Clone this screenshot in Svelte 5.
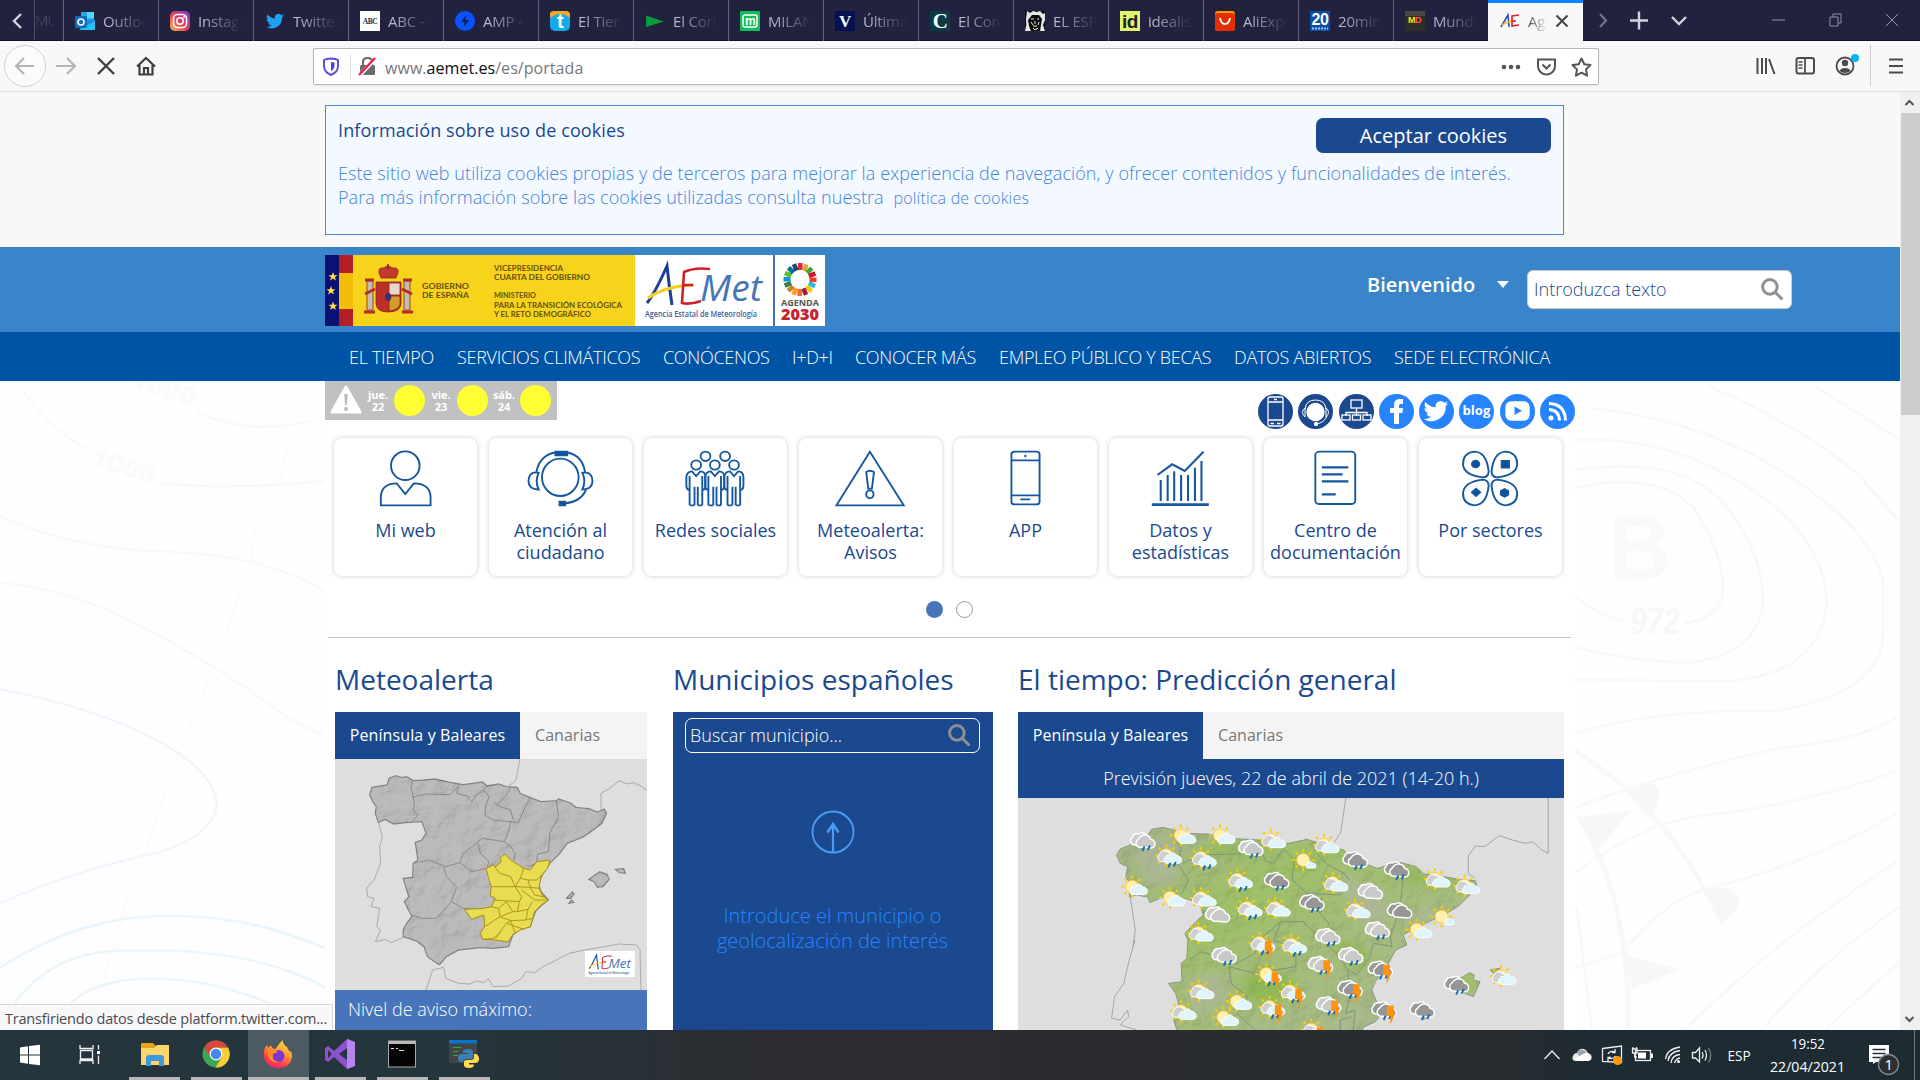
<script>
  const tabs = [
    { t: 'Outloo', k: 'outlook' }, { t: 'Instagr', k: 'insta' }, { t: 'Twitter', k: 'twitter' },
    { t: 'ABC - T', k: 'abc' }, { t: 'AMP - ', k: 'amp' }, { t: 'El Tiem', k: 'tiempo' },
    { t: 'El Corte', k: 'corte' }, { t: 'MILAN', k: 'milan' }, { t: 'Última', k: 'ultima' },
    { t: 'El Conf', k: 'conf' }, { t: 'EL ESP', k: 'esp' }, { t: 'idealis', k: 'id' },
    { t: 'AliExpr', k: 'ali' }, { t: '20minu', k: 'veinte' }, { t: 'Mundo', k: 'mundo' }
  ];
  const nav = [
    ['EL TIEMPO', 108], ['SERVICIOS CLIMÁTICOS', 206], ['CONÓCENOS', 129], ['I+D+I', 63], ['CONOCER MÁS', 144],
    ['EMPLEO PÚBLICO Y BECAS', 235], ['DATOS ABIERTOS', 160], ['SEDE ELECTRÓNICA', 170]
  ];
  const days = [['jue.', '22'], ['vie.', '23'], ['sáb.', '24']];
  const cards = ['Mi web', 'Atención al ciudadano', 'Redes sociales', 'Meteoalerta: Avisos', 'APP', 'Datos y estadísticas', 'Centro de documentación', 'Por sectores'];
  const social = ['phone', 'headset', 'map', 'facebook', 'twitter', 'blog', 'youtube', 'rss'];
  const people = [922, 968, 1015];
  const bars = [[541, 180], [558, 165], [574, 154], [591, 165], [608, 165], [625, 143], [641, 123]];
  const rays = [0, 45, 90, 135, 180, 225, 270, 315];

  // Forecast symbols: position on the map grid, sun, cloud tone, rain, storm
  const weather = [
    [388, 573, 0, 'g', 1, 0], [680, 595, 0, 'g', 1, 0], [888, 860, 0, 'g', 1, 0], [1022, 840, 0, 'g', 1, 0],
    [950, 917, 0, 'g', 1, 0], [608, 917, 0, 'g', 1, 0], [1003, 725, 0, 'g', 0, 0], [590, 795, 0, 'g', 0, 0],
    [962, 630, 0, 'd', 1, 0], [1074, 660, 0, 'd', 1, 0], [750, 692, 0, 'd', 1, 0], [845, 758, 0, 'd', 1, 0],
    [1236, 1004, 0, 'd', 1, 0], [1143, 1080, 0, 'd', 1, 0], [1082, 783, 0, 'd', 0, 0],
    [740, 575, 1, 'm', 0, 0], [884, 590, 1, 'm', 0, 0], [1184, 693, 1, 'm', 0, 0], [908, 705, 1, 'm', 0, 0],
    [968, 785, 1, 'm', 0, 0], [1264, 713, 1, 'm', 0, 0], [552, 750, 1, 'm', 0, 0], [752, 780, 1, 'm', 0, 0],
    [544, 855, 1, 'm', 0, 0], [546, 1028, 1, 'm', 0, 0], [498, 1090, 1, 'm', 0, 0], [1362, 985, 1, 'm', 0, 0],
    [497, 562, 1, 'w', 0, 0], [603, 562, 1, 'w', 0, 0], [366, 716, 1, 'w', 0, 0], [468, 749, 1, 'w', 0, 0],
    [1135, 845, 1, 'w', 0, 0], [648, 1060, 1, 'w', 0, 0], [612, 1108, 1, 'w', 0, 0],
    [828, 636, 1, 's', 0, 0], [1202, 806, 1, 's', 0, 0],
    [458, 622, 1, 'm', 1, 0], [552, 630, 1, 'm', 1, 0], [650, 695, 1, 'm', 1, 0], [676, 780, 1, 'm', 1, 0], [796, 890, 1, 'm', 1, 0],
    [710, 885, 1, 'm', 1, 1], [728, 978, 1, 'w', 1, 1], [792, 1030, 1, 'm', 1, 1], [737, 1077, 1, 'm', 1, 1], [850, 1145, 1, 'm', 1, 1],
    [868, 944, 0, 'g', 1, 1], [890, 1065, 0, 'g', 1, 1],
    [1030, 958, 0, 'd', 1, 1], [948, 1016, 0, 'd', 1, 1], [1040, 1080, 0, 'd', 1, 1]
  ];
</script>

{#snippet lens(size)}
  <svg width={size} height={size} viewBox="0 0 22 22" class="lens"><circle cx="8.5" cy="8.5" r="7" /><path d="M13.5 13.5L20.5 20.5" /></svg>
{/snippet}

{#snippet aemet()}
  <rect width="138" height="71" fill="#fff" />
  <path d="M12 48Q20 38 32 11Q34 30 37 50" fill="none" stroke="#1c3f94" stroke-width="3" />
  <path d="M13 43Q30 31 59 30" fill="none" stroke="#f7cf1b" stroke-width="3" />
  <path d="M75 14Q60 12 49 17L47 48Q55 50 66 46M48 30H58" fill="none" stroke="#cf1f2e" stroke-width="2.600" />
  <text x="65" y="46" class="met" textLength="62" lengthAdjust="spacingAndGlyphs">Met</text>
  <text x="10" y="62" class="agency" textLength="112" lengthAdjust="spacingAndGlyphs">Agencia Estatal de Meteorología</text>
{/snippet}

<div class="screen">
  <div class="tabbar">
    <div class="prev"><svg width="12" height="18" viewBox="0 0 12 18"><path d="M10 2L3 9L10 16" stroke="#d5d5dc" stroke-width="2.4" fill="none" /></svg></div>
    <div class="cut">MU</div>
    {#each tabs as tab}
      <div class="tab">
        <svg width="20" height="20" viewBox="0 0 20 20">
          {#if tab.k === 'outlook'}
            <path d="M6 1h13v8H6z" fill="#28a8ea" /><path d="M12 1h7v6h-7z" fill="#50d9ff" /><path d="M4 9l16 0v10H5z" fill="#1490df" /><path d="M4 19L20 10v9z" fill="#28c0f0" /><rect y="5" width="12" height="12" rx="1" fill="#0f6cbd" /><circle cx="6" cy="11" r="3" fill="none" stroke="#fff" stroke-width="1.6" />
          {:else if tab.k === 'insta'}
            <defs><linearGradient id="ig" x1="0" y1="1" x2="1" y2="0"><stop offset="0" stop-color="#fdc34c" /><stop offset=".45" stop-color="#ee3c54" /><stop offset="1" stop-color="#7638d8" /></linearGradient></defs>
            <rect width="20" height="20" rx="5" fill="url(#ig)" /><rect x="3.5" y="3.5" width="13" height="13" rx="4" fill="none" stroke="#fff" stroke-width="1.6" /><circle cx="10" cy="10" r="3.2" fill="none" stroke="#fff" stroke-width="1.6" /><circle cx="14" cy="6" r="1" fill="#fff" />
          {:else if tab.k === 'twitter'}
            <path transform="translate(1 1) scale(.78)" fill="#1da1f2" d="M23 4.600a10 10 0 0 1-2.700.7 5 5 0 0 0 2-2.600 9 9 0 0 1-3 1.200a4.700 4.700 0 0 0-8 4.300A13.400 13.400 0 0 1 1.700 3.200a4.700 4.700 0 0 0 1.500 6.300 4.700 4.700 0 0 1-2.200-.6 4.700 4.700 0 0 0 3.800 4.700 4.700 4.700 0 0 1-2.100.1 4.700 4.700 0 0 0 4.400 3.300A9.500 9.500 0 0 1 0 19a13.400 13.400 0 0 0 20.600-12z" />
          {:else if tab.k === 'abc'}
            <rect width="20" height="20" fill="#fff" /><text x="10" y="13" class="fi serif" font-size="7.500" fill="#1a2b48">ABC</text>
          {:else if tab.k === 'amp'}
            <circle cx="10" cy="10" r="10" fill="#0b52ff" /><path d="M11 4L6 11h3.500L9 16l5-7h-3.500z" fill="#12224c" />
          {:else if tab.k === 'tiempo'}
            <rect width="20" height="20" rx="5" fill="#16a8e8" /><path d="M0 7V3Q0 0 4 0H16Q20 0 20 4V7Q10-1 0 7z" fill="#f5a623" /><text x="10" y="17" class="fi" font-size="20" fill="#fff">t</text>
          {:else if tab.k === 'corte'}
            <path d="M1 4.500L19 10.500L1 16z" fill="#079b3b" />
          {:else if tab.k === 'milan'}
            <rect width="20" height="20" rx="1" fill="#12bd5a" /><rect x="3" y="4" width="14" height="12" rx="2" fill="none" stroke="#fff" stroke-width="1.500" /><text x="10" y="14" class="fi" font-size="12" fill="#fff">m</text>
          {:else if tab.k === 'ultima'}
            <rect width="20" height="20" fill="#04134f" /><text x="10" y="15.500" class="fi serif" font-size="17" fill="#fff">V</text>
          {:else if tab.k === 'conf'}
            <rect width="20" height="20" fill="#0a3a44" /><text x="10" y="17" class="fi serif" font-size="21" fill="#fff">C</text>
          {:else if tab.k === 'esp'}
            <rect width="20" height="20" fill="#0c0c0c" /><path d="M0 20Q2 14 1 8L2 0L5 2L8 0L12 1L15 0L18 3L20 2V9L18 14L20 20H15L16 14L17 8L14 4H7L3 9L4 15L6 20z" fill="#e6e6e6" /><path d="M6 8h3M12 8h2M8 15h4M8 17l2 2 3-2M10 10v3M6 11l2 3M14 11l-1 3" stroke="#eee" fill="none" />
          {:else if tab.k === 'id'}
            <rect width="20" height="20" fill="#e1f56e" /><text x="10" y="16.500" class="fi" font-size="19" fill="#222">id</text>
          {:else if tab.k === 'ali'}
            <rect width="20" height="20" rx="3" fill="#ff9900" /><path d="M0 4Q0 2 3 2H17Q20 2 20 5V17Q20 20 17 20H3Q0 20 0 17z" fill="#e62e04" /><path d="M5 7Q6 13 10 13Q14 13 15 7" stroke="#fff" stroke-width="1.800" fill="none" />
          {:else if tab.k === 'veinte'}
            <rect width="20" height="20" fill="#0b4ea2" /><text x="10" y="14" class="fi" font-size="16" fill="#fff">20</text><path d="M2 17.500H18" stroke="#9fc4ee" stroke-width="2" stroke-dasharray="2 1" />
          {:else}
            <rect width="20" height="20" fill="#2d2d2a" /><rect width="20" height="5" fill="#494943" /><text x="9.500" y="12" class="fi" font-size="9" fill="#ffe512">M<tspan fill="#f55">D</tspan></text>
          {/if}
        </svg>
        <span>{tab.t}</span>
      </div>
    {/each}
    <div class="tab active">
      <svg width="20" height="20" viewBox="0 0 20 20"><path d="M1 16L8 4L9 16" stroke="#3442b8" stroke-width="1.500" fill="none" /><path d="M2 14Q8 10 14 10" stroke="#f3bd22" stroke-width="1.500" fill="none" /><path d="M19 4L12 5V15L19 14M12 10H16" stroke="#e0222c" stroke-width="1.600" fill="none" /></svg>
      <span>Age</span>
      <svg class="x" width="14" height="14" viewBox="0 0 14 14"><path d="M1.500 1.500L12.500 12.500M12.500 1.500L1.500 12.500" stroke="#444" stroke-width="2" /></svg>
    </div>
    <svg class="winctl" width="337" height="41" viewBox="0 0 337 41" fill="none" stroke="#d3d3da">
      <path d="M17 14L23 20.500L17 27" stroke="#73748a" stroke-width="2.200" />
      <path d="M47 20.500H65M56 11.500V29.500M89 17L96 24L103 17" stroke-width="2.400" />
      <path d="M189 20H202M247 17h8v9h-8zM250 17v-3h8v9h-3M303 14l12 12M315 14l-12 12" stroke="#9092a4" />
    </svg>
  </div>

  <div class="toolbar">
    <div class="btns">
      <svg width="160" height="49" viewBox="0 0 160 49" fill="none" stroke-width="2.200">
        <circle cx="25" cy="25" r="20.500" stroke="#d2d2d2" stroke-width="1" fill="#fbfbfb" />
        <path d="M34 25H16M24 17L16 25L24 33M56 25H74M67 17L75 25L67 33" stroke="#b5b5b6" />
        <path d="M98 17L114 33M114 17L98 33" stroke="#3f3f40" stroke-width="2.400" />
        <path d="M137 25.500L146 17L155 25.500M139.500 24V33.500H152.500V24M144 33V27H148V33" stroke="#3f3f40" stroke-width="2.200" />
      </svg>
    </div>
    <div class="url">
      <svg width="66" height="36" viewBox="0 0 66 36" fill="none">
        <path d="M17 9.500q-5 .3-7 1.500v6q0 6 7 9q7-3 7-9v-6q-2-1.200-7-1.500z" stroke="#5a50de" stroke-width="2" /><path d="M17 13v9q3.500-2 3.500-5.500V13.500z" fill="#4646d8" />
        <path d="M36.500 5V31" stroke="#ddd" /><rect x="46" y="16" width="15" height="10" rx="1.500" fill="#6a6a6d" /><path d="M49 17V13q0-4 4.500-4t4.500 4v4" stroke="#6a6a6d" stroke-width="2.200" /><path d="M46 26L61 10" stroke="#fff" stroke-width="4" /><path d="M45 26L61 9" stroke="#f51549" stroke-width="2.200" />
      </svg>
      <span class="addr">www.<b>aemet.es</b>/es/portada</span>
      <svg width="104" height="36" viewBox="0 0 104 36" fill="none" stroke="#545456" stroke-width="2">
        <g fill="#545456" stroke="none"><circle cx="10" cy="18" r="2.300" /><circle cx="17" cy="18" r="2.300" /><circle cx="24" cy="18" r="2.300" /></g>
        <path d="M44 10.500H61V17a8.500 8.500 0 0 1-17 0zM48.500 15.500L52.500 19.500L56.500 15.500" />
        <path d="M87.500 9.500L90.300 15.200L96.500 16L92 20.400L93.100 26.700L87.500 23.700L81.900 26.700L83 20.400L78.500 16L84.700 15.200z" stroke-linejoin="round" />
      </svg>
    </div>
    <svg class="tools" width="172" height="49" viewBox="0 0 172 49" fill="none" stroke="#4b4b4d" stroke-width="2">
      <path d="M9.500 17V33M14 17V33M18 17V33M21 18L26.500 33" />
      <rect x="48.500" y="17" width="17.500" height="15.500" rx="2" /><path d="M57 17V32M50.500 21H54.500M50.500 24H54.500M50.500 27H54.500" stroke-width="1.700" />
      <circle cx="97" cy="25" r="8.500" stroke-width="1.800" /><circle cx="97" cy="22" r="3.200" fill="#4b4b4d" stroke="none" /><path d="M91.500 30q1-3 5.500-3t5.500 3q-5.500 4-11 0z" fill="#4b4b4d" stroke="none" /><circle cx="107" cy="17" r="4" fill="#00b3f4" stroke="none" />
      <path d="M122.500 4V45" stroke="#ccc" stroke-width="1" /><path d="M141 18.500H155M141 25H155M141 31.500H155" stroke-width="2.200" />
    </svg>
  </div>

  <div class="viewport">
    <div class="page">
      <div class="cookiewrap">
        <section class="cookie">
          <div class="info">
            <h3>Información sobre uso de cookies</h3>
            <p>Este sitio web utiliza cookies propias y de terceros para mejorar la experiencia de navegación, y ofrecer contenidos y funcionalidades de interés.</p>
            <p class="second">Para más información sobre las cookies utilizadas consulta nuestra <a href="#politica">política de cookies</a></p>
          </div>
          <button class="accept">Aceptar cookies</button>
        </section>
      </div>

      <header>
        <svg width="500" height="71" viewBox="0 0 500 71">
          <rect width="14" height="71" fill="#0a1172" /><rect x="14" width="14" height="71" fill="#b21f24" /><rect x="14" y="18" width="14" height="36" fill="#f3bd0c" />
          <g fill="#ffe14a"><path id="st" d="M8 17l1.200 3.200h3.300l-2.600 2 1 3.300L8 23.500l-2.900 2 1-3.300-2.600-2h3.300z" /><use href="#st" x="-2" y="14" /><use href="#st" y="29.500" /></g>
          <rect x="28" width="282" height="71" fill="#f8d31c" />
          <g stroke="#8b271b" stroke-width=".8">
            <path d="M54 18Q53 12 59 13Q63 9 67 13Q74 12 73 18L71 23H56z" fill="#c53a2b" /><path d="M63 9V14" stroke-width="1.600" />
            <path d="M51 27H76V48Q76 57 63 57Q51 57 51 48z" fill="#bd3028" /><rect x="64" y="28" width="11" height="12" fill="#ead5cd" /><path d="M64 41H75V50Q73 55 64 56z" fill="#d49a2a" />
            <path d="M42 26h6v29h-6zM79 26h6v29h-6z" fill="#c3bdb2" /><path d="M39 57H50M77 57H88M40 25H49M78 25H87M40 39L50 34M77 34L87 39" stroke="#b62d25" stroke-width="3" />
            <ellipse cx="63" cy="42" rx="3" ry="4" fill="#2a348f" />
          </g>
          <g class="gov"><text x="97" y="33.500" textLength="47" lengthAdjust="spacingAndGlyphs">GOBIERNO</text><text x="97" y="42.500" textLength="47" lengthAdjust="spacingAndGlyphs">DE ESPAÑA</text>
            <text x="169" y="15.500" textLength="69" lengthAdjust="spacingAndGlyphs">VICEPRESIDENCIA</text><text x="169" y="25" textLength="96" lengthAdjust="spacingAndGlyphs">CUARTA DEL GOBIERNO</text>
            <text x="169" y="43" textLength="42" lengthAdjust="spacingAndGlyphs">MINISTERIO</text><text x="169" y="52.500" textLength="128" lengthAdjust="spacingAndGlyphs">PARA LA TRANSICIÓN ECOLÓGICA</text><text x="169" y="61.500" textLength="97" lengthAdjust="spacingAndGlyphs">Y EL RETO DEMOGRÁFICO</text></g>
          <g transform="translate(310 0)">{@render aemet()}</g>
          <rect x="448" width="2" height="71" fill="#4272b5" /><rect x="450" width="50" height="71" fill="#fff" />
          <g fill="none" stroke-width="7" stroke-dasharray="4.600 .6">
            {#each ['#e5243b', '#dda63a', '#4c9f38', '#c5192d', '#ff3a21', '#26bde2', '#fcc30b', '#a21942', '#fd6925', '#fd9d24', '#bf8b2e', '#3f7e44', '#0a97d9', '#56c02b', '#00689d', '#19486a'] as c, i}
              <path d="M473 11.500h4.600" stroke={c} transform="rotate({i * 22.5} 475 24.500)" />
            {/each}
          </g>
          <text x="456" y="51" class="agenda" textLength="38" lengthAdjust="spacingAndGlyphs">AGENDA</text>
          <text x="456" y="64.500" class="y2030" textLength="38" lengthAdjust="spacingAndGlyphs">2030</text>
        </svg>
        <div class="welcome">Bienvenido<svg width="12" height="7" viewBox="0 0 12 7"><path d="M0 0H12L6 7z" fill="#fff" /></svg></div>
        <div class="search"><span>Introduzca texto</span>{@render lens(23)}</div>
      </header>

      <nav>{#each nav as [label, w]}<a href="#nav" style="width:{w}px">{label}</a>{/each}</nav>

      <div class="main">
        <svg class="contours" width="325" height="649" viewBox="0 0 975 1544" preserveAspectRatio="none">
          <g class="soft"><path d="M70 25Q170 130 260 160M480 243Q700 260 975 238M590 75Q740 130 930 95M0 320Q160 385 420 403Q700 410 790 440Q880 455 975 500M0 480Q200 490 440 590Q700 700 860 800L975 848" /><path class="faint" d="M870 130L840 240M770 330L750 440L640 680L540 880L450 1090L370 1260L310 1420" />
            <text x="270" y="200" transform="rotate(14 270 200)" textLength="195" lengthAdjust="spacingAndGlyphs">1000</text><text x="395" y="15" transform="rotate(14 395 15)" textLength="190" lengthAdjust="spacingAndGlyphs">1000</text></g>
          <path class="lav" d="M0 733Q280 775 460 850Q650 930 650 1010Q640 1080 480 1120Q200 1170 0 1243" />
          <path class="sky" d="M0 1395Q250 1270 500 1273Q750 1270 975 1350M40 1485Q150 1360 360 1355H520Q800 1365 975 1443M210 1480Q300 1420 450 1422Q620 1420 810 1480" />
        </svg>
        <div class="center">
          <div class="topstrip">
            <div class="alerts">
              <svg width="32" height="30" viewBox="0 0 32 30"><path d="M16 2L30 27H2z" fill="#fff" stroke="#fff" stroke-width="3" stroke-linejoin="round" /><path d="M14.300 9h3.400l-.8 11h-1.800z" fill="#bbb" /><circle cx="16" cy="24" r="2" fill="#bbb" /></svg>
              {#each days as [d, n]}<span class="day">{d}<br />{n}</span><i class="dot"></i>{/each}
            </div>
            <div class="social">
              {#each social as s, i}
                <svg width="35" height="35" viewBox="0 0 35 35">
                  <circle cx="17.500" cy="17.500" r="17.500" fill={i < 3 ? '#1b498f' : '#2684ff'} />
                  <g fill="none" stroke="#fff" stroke-width="1.300">
                    {#if s === 'phone'}<rect x="10" y="3" width="15" height="29" rx="2" /><path d="M10 8H25M10 26H25M16 5.500H19" /><path d="M12.500 29.500H16M19 29.500H22.500" />
                    {:else if s === 'headset'}<circle cx="17.500" cy="18" r="8.500" fill="#fff" /><path d="M7 15Q8 6 17.500 6T28 15M29 22Q26 29 18 30" stroke-width="1" /><path d="M7 14Q2 18 7 23zM28 14Q33 18 28 23z" stroke-width="1" /><circle cx="18" cy="30" r="1.500" fill="#fff" />
                    {:else if s === 'map'}<rect x="12" y="6" width="11" height="8" /><path d="M17.500 14V22M7 22V18.500H28V22" /><rect x="3" y="21" width="8" height="5" /><rect x="13.500" y="21" width="8" height="5" /><rect x="24" y="21" width="8" height="5" />
                    {:else if s === 'facebook'}<path d="M15 30V19H11V14H15V11Q15 5 20.500 5H24V10H21.500Q20 10 20 12V14H24L23.500 19H20V30z" fill="#fff" stroke="none" />
                    {:else if s === 'twitter'}<path transform="translate(4.500 4.500) scale(1.080)" stroke="none" fill="#fff" d="M23 4.600a10 10 0 0 1-2.700.7 5 5 0 0 0 2-2.600 9 9 0 0 1-3 1.200a4.700 4.700 0 0 0-8 4.300A13.400 13.400 0 0 1 1.700 3.200a4.700 4.700 0 0 0 1.500 6.300 4.700 4.700 0 0 1-2.200-.6 4.700 4.700 0 0 0 3.800 4.700 4.700 4.700 0 0 1-2.100.1 4.700 4.700 0 0 0 4.400 3.300A9.500 9.500 0 0 1 0 19a13.400 13.400 0 0 0 20.600-12z" />
                    {:else if s === 'blog'}<text x="17.500" y="21" class="blog" textLength="28" lengthAdjust="spacingAndGlyphs">blog</text>
                    {:else if s === 'youtube'}<rect x="6" y="8" width="23" height="18" rx="5" fill="#fff" /><path d="M14.500 12.500V21L22 16.800z" fill="#2684ff" stroke="none" />
                    {:else}<circle cx="11" cy="24" r="2.500" fill="#fff" stroke="none" /><path d="M9 15.500Q19 16 19.500 26.500M9 9.500Q25 10 25.500 26.500" stroke-width="3" />{/if}
                  </g>
                </svg>
              {/each}
            </div>
          </div>

          <div class="cards">
            {#each cards as label, i}
              <div class="card">
                <svg width="143" height="60" viewBox="{34 + 380 * (i % 4)} 84 351 180" preserveAspectRatio="none" class="ci">
                  {#if i === 0}
                    <ellipse cx="209" cy="137" rx="35" ry="43" /><path d="M149 256V228Q152 190 188 190L209 222L230 190Q268 190 271 228V256z" />
                  {:else if i === 1}
                    <ellipse cx="589" cy="172" rx="45" ry="56" /><path d="M530 157Q540 96 591 96Q642 96 650 157M652 210Q638 247 598 250M530 157Q511 157 511 184Q511 208 536 209Q526 184 536 158zM648 157Q668 157 668 184Q668 208 643 209Q653 184 643 158z" /><path d="M577 95h29v11h-29zM587 245h14v11h-14z" class="solid" />
                  {:else if i === 2}
                    <ellipse cx="945" cy="109" rx="12" ry="14" /><ellipse cx="993" cy="109" rx="12" ry="14" />
                    {#each people as x}<g transform="translate({x} 0)"><ellipse cx="0" cy="135" rx="12" ry="14" /><path d="M-16 256V168M15 256V168M-4 256V200M4 256V200M-16 256H-4M4 256H15M-16 210Q-24 210-24 196V170Q-22 154-10 154L0 168L10 154Q22 154 23 170V196Q23 210 15 210" /></g>{/each}
                  {:else if i === 3}
                    <path d="M1266 256L1348 95L1431 256z" /><path d="M1339 156Q1348 148 1358 156L1353 206H1344z" /><ellipse cx="1348" cy="223" rx="9" ry="12" />
                  {:else if i === 4}
                    <rect x="175" y="95" width="69" height="158" rx="8" /><path d="M175 121H244M175 226H244M197 238H221M209 104V112" />
                  {:else if i === 5}
                    <path d="M519 254H659" class="thick" />{#each bars as [x, y]}<path d="M{x} {y}V243" class="mid" />{/each}<path d="M533 165L569 133L600 153L646 95" class="mid" />
                  {:else if i === 6}
                    <rect x="920" y="95" width="98" height="157" rx="10" /><path d="M936 142H1001M936 163H987M936 184H1001M936 223H970" class="mid" />
                  {:else}
                    <path d="M1310 95Q1282 98 1282 133Q1284 165 1330 172Q1344 172 1345 155Q1340 96 1310 95zM1387 95Q1415 98 1415 133Q1413 165 1367 172Q1353 172 1352 155Q1357 96 1387 95zM1310 256Q1282 253 1282 220Q1284 186 1330 179Q1344 179 1345 197Q1340 255 1310 256zM1387 256Q1415 253 1415 220Q1413 186 1367 179Q1353 179 1352 197Q1357 255 1387 256z" />
                    <g class="solid"><ellipse cx="1313" cy="132" rx="9" ry="10" /><path d="M1377 123h18v20h-18zM1314 206l10 11-10 11-10-11zM1384 207l9 6v11l-9 6-9-6v-11z" /></g>
                  {/if}
                </svg>
                <span>{label}</span>
              </div>
            {/each}
          </div>
          <div class="pager"><i class="on"></i><i></i></div>
          <div class="rule"></div>

          <div class="panels">
            <section class="p1">
              <h2>Meteoalerta</h2>
              <div class="ptabs"><b>Península y Baleares</b><span>Canarias</span></div>
              <svg class="map" width="312" height="231" viewBox="35 327 719 693" preserveAspectRatio="none">
                <defs><filter id="relief" x="0" y="0" width="100%" height="100%" color-interpolation-filters="sRGB"><feTurbulence type="fractalNoise" baseFrequency=".02" numOctaves="4" seed="4" /><feDiffuseLighting lighting-color="#fff" surfaceScale="3" diffuseConstant="1.1"><feDistantLight azimuth="225" elevation="65" /></feDiffuseLighting><feComposite in2="SourceAlpha" operator="in" result="l" /><feBlend in="SourceGraphic" in2="l" mode="multiply" /></filter></defs>
                <rect x="35" y="327" width="719" height="693" fill="#dedede" />
                <path class="coast" d="M461 327L452 392L430 412M648 478V430L668 415L690 392L708 402L722 398L740 408L754 422M135 518L144 560L138 590L140 640L125 690L108 715L110 740L125 745L118 770L138 775L131 830L140 840L128 875L150 868L165 878L192 862M245 1020L260 960L285 952L290 985L320 1000L345 1002L360 993L380 998L388 985L400 1010L435 1008L465 985L475 965L495 968L515 950L575 910L610 900L690 882L730 885L738 900L740 1020" />
                <path class="land" d="M115 435L120 412L155 405L160 385L175 377L188 382L200 380L215 392L240 390L265 387L300 397L330 404L375 396L385 408L412 402L430 410L455 412L462 430L485 443L510 455L545 452L550 447L578 459L590 472L620 476L640 486L655 477L661 490L650 520L625 545L605 562L570 580L552 612L530 640L515 670L503 700L510 725L527 750L510 767L497 785L490 810L485 830L462 838L445 855L435 890L400 895L370 893L320 900L292 920L275 945L248 920L240 890L225 875L205 865L192 860L192 840L200 820L212 800L195 755L205 740L192 685L214 682L215 640L226 630L220 577L235 570L245 550L235 515L205 517L170 522L150 508L135 518L128 490L130 470L122 455z" />
                <path class="land" d="M620 688L645 665L662 673L667 688L652 710L640 712L632 695zM681 658L700 656L704 670L690 668zM568 745L582 726L586 732L578 745zM574 760L580 750L585 757z" />
                <path class="prov" d="M215 392L210 410L215 440L218 460L215 480L226 495L210 520M213 442L245 432L300 434L320 408M320 408L315 430L340 438L350 455L360 436L378 420L385 408M378 420L390 440L383 465L380 495L400 510L440 515L458 518M400 455L415 470L440 480L446 510M440 412L430 435L410 460M485 443L470 480L458 518M440 515L435 545L425 575M545 452L550 500L530 550L527 605L502 612L500 640L480 650M425 575L375 565L360 580L330 610L323 638L290 650L250 630L215 640M365 580L370 610L390 635L385 655M425 575L440 590L450 610L448 630M323 638L350 665L385 655L400 640M285 648L292 680L315 712L303 755L270 805L235 805L212 795M303 755L330 775L390 778" />
                <path class="alert" d="M383 655L400 645L404 652L418 635L416 622L427 612L440 630L470 655L485 660L500 635L530 630L525 655L510 678L505 715L515 740L527 750L510 765L495 785L485 830L462 840L446 852L433 876L405 870L375 868L370 850L380 828L378 795L350 808L333 778L378 775L395 770L405 745L393 738L395 710L388 680z" />
                <path class="apr" d="M404 652L415 670L440 680L450 710L395 710M470 655L462 685L450 710L465 740L460 755L400 750M462 685L480 690L485 712L450 710M485 712L505 715M480 690L500 690L510 678M485 712L495 735L515 740M465 720L495 750L527 750M395 770L412 775L415 800L380 830M412 775L430 755L445 785L415 800M460 755L455 785L445 785M455 785L480 778L490 755M480 778L475 810L440 812L415 800M475 810L490 805M440 812L430 820L405 865M440 812L450 850M430 820L470 838M375 868L400 865L415 850" />
                <g transform="translate(611 903) scale(.833 1.098)">{@render aemet()}</g>
              </svg>
              <div class="level">Nivel de aviso máximo:</div>
            </section>

            <section class="p2">
              <h2>Municipios españoles</h2>
              <div class="muni">
                <div class="msearch"><span>Buscar municipio...</span>{@render lens(23)}</div>
                <svg class="up" width="44" height="44" viewBox="0 0 44 44" fill="none" stroke="#4a9df5" stroke-width="1.800"><circle cx="22" cy="22" r="20.500" /><path d="M22 43V14" stroke-width="2.200" /><path d="M16.500 22.500L22 14L27.500 22.500" stroke-width="2.400" /></svg>
                <p>Introduce el municipio o<br />geolocalización de interés</p>
              </div>
            </section>

            <section class="p3">
              <h2>El tiempo: Predicción general</h2>
              <div class="ptabs"><b>Península y Baleares</b><span>Canarias</span></div>
              <div class="prev-title">Previsión jueves, 22 de abril de 2021 (14-20 h.)</div>
              <svg width="546" height="232" viewBox="0 0 546 232">
                <defs>
                  <linearGradient id="gr" x1="0" y1="0" x2="1" y2="1"><stop offset="0" stop-color="#a6b58c" /><stop offset=".35" stop-color="#9fc069" /><stop offset=".6" stop-color="#a5bd7c" /><stop offset="1" stop-color="#acb997" /></linearGradient>
                  <filter id="haze"><feGaussianBlur stdDeviation="14" /></filter>
                </defs>
                <rect width="546" height="232" fill="#dedede" />
                <g transform="scale(.37 .33333) translate(-49 -444)">
                  <path class="coast2" d="M935 444L921 548L905 575M1482 444V610L1465 600L1440 575L1420 580L1385 570L1350 557L1310 590L1285 588L1266 618V670L1285 685M352 740L357 775L366 840L360 890L365 870L345 950L335 1000L310 1040L302 1105L325 1110L345 1080L348 1100L325 1125L370 1140" />
                  <path class="green" d="M315 615L325 597L352 585L360 572L400 555L410 538L440 532L470 540L490 550L560 552L640 566L700 570L780 580L830 568L870 582L930 600L940 615L985 640L1020 655L1050 645L1085 638L1125 650L1145 672L1200 680L1250 690L1285 692L1290 710L1270 735L1240 768L1200 795L1120 835L1090 855L1100 885L1070 900L1045 950L1015 995L1005 1020L1020 1060L1035 1085L1015 1115L985 1130L975 1145H480L470 1110L485 1070L475 1030L455 1000L492 995L490 940L505 925L508 870L500 850L530 815L550 795L540 760L500 745L440 742L405 758L400 742L370 735L350 740L352 700L340 680L345 650L325 640z" />
                  <path class="green" d="M1205 1010L1270 968L1282 975L1280 990L1298 995L1280 1040L1255 1030L1240 1015zM1325 960L1350 955L1370 975L1335 970zM1140 1100L1155 1085L1160 1095L1145 1110z" />
                  <path class="lime" d="M1085 655Q1130 660 1145 685Q1200 700 1240 705L1210 715L1140 705L1095 690zM540 600Q600 580 740 595L700 615L560 610zM900 880Q930 870 990 900L1000 940L960 960L910 900zM660 980Q740 950 810 1000L790 1040L700 1070L660 1030z" />
                  <path class="grey" d="M900 640Q960 700 1040 730L1060 800L990 830L940 760zM360 600Q420 560 470 570L480 700L400 710zM500 980L600 970L620 1050L520 1100zM1080 800L1180 770L1200 785L1100 840z" />
                  <path class="prov2" d="M480 550L490 600L480 640L510 690L490 735M495 640L540 615L640 612L700 590L720 635L740 640L770 590L780 580M770 600L795 630L790 690L830 730L920 735L935 715M850 600L880 640L930 670L945 690M1085 638L1090 690L1080 780L1055 860L1060 890L1010 880L1000 920L965 975L940 960L910 910L870 870L820 815L760 815L700 870L690 910L640 940L545 905L510 930M870 740L865 790L890 820L870 870M760 815L740 870L800 900L800 950L690 970L620 950M620 950L625 1000L670 1040L640 1090L690 1140M940 960L945 1040L935 1090L960 1080L955 1140M920 1140L920 1110L950 1100" />
                </g>
                {#each weather as [x, y, sun, tone, rain, storm]}
                  <g transform="translate({(x - 49) * 0.37} {(y - 444) / 3})">
                    {#if sun}
                      {#each rays as a}<path d="M-3-13V-10" stroke="#fc0" stroke-width="1.900" transform="rotate({a} -3 -2)" />{/each}
                      <circle cx="-3" cy="-2" r="6.500" fill="#fff0ae" stroke="#fcc63a" stroke-width=".9" />
                      {#if tone === 'm'}<path d="M-9 4a4 4 0 0 1-1-7q2-5 7-3l5 3v8z" fill="#cfcfd0" stroke="#fff" stroke-width="1" />{/if}
                      {#if tone === 's'}<path d="M1 6a2.500 2.500 0 0 1 0-4q2-4 5-1q5 0 3 5z" fill="#dbf3fb" stroke="#fff" />{:else}<path d="M-3 6a3.500 3.500 0 0 1-1-6q1-3 4-2q4-5 7 0q6 1 5 6q-1 2-3 2z" fill="#dff4fb" stroke="#fff" />{/if}
                    {:else}
                      <path d="M-9 4a4.500 4.500 0 0 1-2-8q1-4 6-3q6-3 8 2v9z" fill={tone === 'd' ? '#999' : '#cbcbcb'} stroke="#fff" stroke-width="1.500" />
                      <path d="M-5 6a4.500 4.500 0 0 1 0-8q4-6 10-3q2 1 2 3q6 2 4 7q-1 2-3 2z" fill={tone === 'd' ? '#969696' : '#c9c9c9'} stroke="#fff" stroke-width="1.500" />
                    {/if}
                    {#if rain}<path d="M1 5.500L-1 10M6.500 4.500L4.500 9" stroke="#1769b0" stroke-width="1.900" />{/if}
                    {#if storm}<path d="M2.500-4.500H9V2.500H11L5.500 15L6 6H2z" fill="#ff930f" />{/if}
                  </g>
                {/each}
              </svg>
            </section>
          </div>
        </div>
        <svg class="contours" width="325" height="649" viewBox="15 0 975 1544" preserveAspectRatio="none">
          <g class="soft2"><path d="M60 65Q330 85 560 180Q900 330 940 480V600Q940 740 620 785Q260 780 15 838M15 140Q340 130 600 290Q770 400 770 530Q750 700 460 715L15 710M15 212Q350 175 470 300Q580 410 580 530Q560 650 360 670Q200 670 15 633M15 255Q250 210 370 300Q460 410 460 500Q450 565 340 577M15 510Q80 560 165 570M410 10Q700 110 860 220L990 335M740 15L990 140M15 1015Q300 930 620 875Q900 850 990 795M15 1170Q200 1060 380 1035Q700 1010 990 925M15 1395L160 1360Q260 1250 400 1210Q720 1150 990 1025M350 1540Q600 1340 990 1138M580 1540Q750 1380 990 1250M770 1540L990 1380M20 1250L65 1540" />
            <path class="front" d="M15 880Q300 1020 450 1280M25 1035Q180 1230 175 1540" /><path class="blob" d="M25 1040L175 1025L85 1110zM170 975Q270 940 265 990L240 1040zM410 1210Q520 1200 500 1250L455 1290zM172 1370L320 1400L185 1445z" />
            <text class="bigb" x="115" y="470" textLength="190" lengthAdjust="spacingAndGlyphs">B</text><text class="n9" x="180" y="603" textLength="150" lengthAdjust="spacingAndGlyphs">972</text></g>
        </svg>
      </div>
    </div>
    <div class="scroll">
      <svg width="20" height="21" viewBox="0 0 20 21"><path d="M5.500 13L9.500 9L13.500 13" stroke="#555" stroke-width="2" fill="none" /></svg>
      <div class="thumb"></div>
      <svg class="down" width="20" height="21" viewBox="0 0 20 21"><path d="M5.500 8L9.500 12L13.500 8" stroke="#555" stroke-width="2" fill="none" /></svg>
    </div>
    <div class="status">Transfiriendo datos desde platform.twitter.com...</div>
  </div>

  <footer>
    <svg class="start" width="62" height="50" viewBox="0 0 62 50" fill="#fff"><path d="M20 17.500L28 16.300V24.500H20zM29 16.100L40 14.800V24.500H29zM20 25.500H28V33.800L20 32.500zM29 25.500H40V35.200L29 34z" /></svg>
    <svg width="62" height="50" viewBox="0 0 62 50" fill="none" stroke="#eee" stroke-width="1.300"><path d="M18 15V18.500H31V15M18 34V30.500H31V34M18.500 20.500H30.500V29H18.500zM36.500 15V19.500M36.500 25.500V34" /><path d="M35 21h3v3h-3z" fill="#fff" stroke="none" /></svg>
    <div class="app one"><svg width="28" height="28" viewBox="0 0 28 28"><path d="M0 4Q0 3 1 3H12L15 6H28V24H0z" fill="#e7a31a" /><path d="M0 8H13L16 5H28V25H0z" fill="#ffd66b" /><path d="M5 26V18Q5 15 8 15H20Q23 15 23 18V26H18V21H10V26z" fill="#3b9bdc" /></svg></div>
    <div class="app"><svg width="28" height="28" viewBox="0 0 28 28"><circle cx="14" cy="14" r="13.500" fill="#3aa757" /><path d="M14 7.500H26A13.500 13.500 0 0 1 13.500 27.500L20 17z" fill="#fccc34" /><path d="M2.300 7.200A13.500 13.500 0 0 1 25.800 7.500H14A6.500 6.500 0 0 0 8 17z" fill="#d9473c" /><circle cx="14" cy="14" r="6.500" fill="#fff" /><circle cx="14" cy="14" r="5.200" fill="#4688ee" /></svg></div>
    <div class="app sel"><svg width="30" height="30" viewBox="0 0 30 30"><defs><linearGradient id="ff" x1=".8" y1="0" x2=".3" y2="1"><stop offset="0" stop-color="#ffe542" /><stop offset=".4" stop-color="#ffa031" /><stop offset=".75" stop-color="#ff3c4c" /><stop offset="1" stop-color="#f0266f" /></linearGradient></defs><path d="M1 17Q0 10 4 6L5 9L8 6Q8 9 12 10L14 8Q16 4 20 1Q19 5 24 8L26 12Q29 12 29 17Q28 29 15 29Q2 28 1 17z" fill="url(#ff)" /><circle cx="15.500" cy="17" r="6" fill="#7a35d6" /><path d="M5 11Q12 9 15 13L10 15Q8 22 17 23Q8 25 5 18z" fill="#ff8a26" /></svg></div>
    <div class="app vs"><svg width="30" height="30" viewBox="0 0 30 30"><path d="M22 0L30 3V27L22 30L9 18L3 23L0 21V9L3 7L9 12zM22 9L14 15L22 21zM3 11V19L7 15z" fill="#8f50d0" fill-rule="evenodd" /><path d="M22 0L30 3V27L22 30z" fill="#b585ea" /></svg></div>
    <div class="app"><svg width="28" height="28" viewBox="0 0 28 28"><rect x=".5" y="1" width="27" height="26" fill="#050505" stroke="#aaa" /><rect x="1" y="1" width="26" height="3" fill="#bbb" /><path d="M3 8.500H6M8 8.500H10M11 10.500H16" stroke="#ddd" /></svg></div>
    <div class="app py"><svg width="30" height="30" viewBox="0 0 30 30"><rect x="0" y="1" width="28" height="23" fill="#414547" /><rect width="28" height="3.500" y="1" fill="#0875c9" /><path d="M4 8.500H12M4 12.500H9M4 16.500H9" stroke="#2faa43" /><path d="M19 10Q24 10 24 13V18Q24 20 21 20H17Q14 20 14 23H12Q9 23 9 19Q9 15 13 15H19V14H14V12Q14 10 19 10z" fill="#3d7fb5" /><path d="M20 29Q15 29 15 26V23Q15 21 18 21H22Q25 21 25 18V15H27Q30 16 30 20Q30 24 26 24H20V25.500H25Q25 29 20 29z" fill="#ffdb4d" /></svg></div>
    <svg class="tray" width="420" height="50" viewBox="0 0 420 50" fill="none" stroke="#eee" stroke-width="1.300">
      <path d="M44.500 29L52 21L59.500 29" />
      <path d="M75 31Q71 30 73 26Q74 23 77 23Q79 18 84 19Q87 20 88 23Q92 24 91.500 28Q91 31 88 31z" fill="#e9e9e9" stroke="none" /><path d="M76 28L86 23Q93 25 91 29L88 31H77z" fill="#fff" stroke="none" /><path d="M77 22Q81 17 87 22L79 26z" fill="#9fa6a8" stroke="none" />
      <path d="M102.500 18.500L121.500 16V32.500L102.500 31.500zM108 24Q110 20 115 22M115 19V22.500H112M115.500 26Q113 30 108.500 28M108 31V27.500H111" /><circle cx="117.500" cy="30.500" r="4.500" fill="#ff980e" stroke="none" />
      <rect x="135.500" y="20.500" width="15" height="10" /><path d="M152 23.500V28" stroke-width="2" /><rect x="138" y="22.500" width="8" height="6" fill="#fff" stroke="none" /><path d="M132.500 19V23H137V19zM134.700 23V27H137M133 17V19M136.500 17V19" />
      <path d="M171 33Q172 25 180 24.500M168 31Q169 22 180 20.500M165.500 29Q167 19 180 17" /><path d="M174.500 33Q176 28.500 180 28" /><circle cx="178.500" cy="31.500" r="1.500" fill="#fff" stroke="none" />
      <path d="M192.500 22.500H195.500L199.500 18V32L195.500 28H192.500zM202 22Q204 25 202 28.500M205 20Q208 25 205 30.500" /><path d="M208.500 18Q213 25 208.500 32.500" stroke="#77858b" />
      <path d="M369 15H389V32H376L373 34V32H369z" fill="#fff" stroke="none" /><path d="M372.500 19.500H385.500M372.500 23.500H385.500M372.500 27.500H381" stroke="#223037" /><circle cx="388.500" cy="34.500" r="10" fill="#2b2f31" stroke="#84898c" />
      <path d="M414.500 0V50" stroke="#6f7a80" stroke-width="1" />
      <g class="tt"><text x="227.500" y="31" textLength="23" lengthAdjust="spacingAndGlyphs">ESP</text><text x="291" y="18.500" textLength="34" lengthAdjust="spacingAndGlyphs">19:52</text><text x="270" y="42" textLength="75" lengthAdjust="spacingAndGlyphs">22/04/2021</text><text x="384.500" y="40">1</text></g>
    </svg>
  </footer>
</div>

<style>
  :global(body) { margin: 0; overflow: hidden; }
  * { box-sizing: border-box; }
  svg { display: block; flex: none; }
  h2, h3, p { margin: 0; font-weight: 400; }
  a { color: inherit; text-decoration: none; }
  .screen { width: 1920px; height: 1080px; display: flex; flex-direction: column; font-family: 'Open Sans', sans-serif; overflow: hidden; background: #fff; }
  .tabbar { height: 41px; background: #20223f; display: flex; border-bottom: 1px solid #10122e; flex: none; }
  .prev { width: 35px; padding: 12px 0 0 11px; border-right: 1px solid #4b4d68; }
  .cut { width: 28px; font-size: 15px; line-height: 41px; color: #484a63; letter-spacing: -1px; overflow: hidden; mask-image: linear-gradient(90deg, #0006, #000 40%, transparent 75%); }
  .tab { width: 95px; height: 41px; display: flex; padding: 11px 0 0 11px; border-left: 1px solid #62647b; flex: none; }
  .tab span { font-size: 15px; line-height: 21px; margin-left: 8px; width: 46px; overflow: hidden; white-space: nowrap; letter-spacing: -.2px; color: #b9bac8; mask-image: linear-gradient(90deg, #000 10%, transparent 96%); }
  .tab.active { background: #f8f8f8; border-left: 0; border-top: 3px solid #0a84ff; padding: 8px 0 0 12px; }
  .tab.active span { width: 20px; color: #555; }
  .tab.active .x { margin: 3px 0 0 7px; }
  .fi { text-anchor: middle; font-weight: 700; font-family: 'Liberation Sans', sans-serif; letter-spacing: -.5px; }
  .serif { font-family: 'Liberation Serif', serif; }
  .toolbar { height: 51px; flex: none; background: #f8f8f8; border-bottom: 1px solid #dedede; display: flex; }
  .btns { width: 313px; }
  .url { width: 1286px; height: 37px; margin-top: 7px; border: 1px solid #b8b8b8; border-radius: 2px; background: #fff; display: flex; box-shadow: 0 1px 3px #0001; }
  .addr { flex: 1; padding-left: 5px; line-height: 38px; height: 35px; font-size: 16px; color: #77777a; letter-spacing: .05px; }
  .addr b { font-weight: 400; color: #0c0c0d; }
  .tools { margin-left: 149px; }
  .viewport { height: 938px; display: flex; position: relative; flex: none; }
  .page { width: 1900px; overflow: hidden; }
  .cookiewrap { height: 155px; background: #f8f8f8; padding: 13px 0 0 325px; }
  .cookie { width: 1239px; height: 130px; border: 1px solid #4a86d8; background: #f4f8ff; display: flex; justify-content: space-between; padding: 12px; white-space: nowrap; }
  .info { width: 0; }
  .cookie h3 { font-size: 18px; line-height: 25px; color: #1b498f; letter-spacing: .12px; }
  .cookie p { font-size: 18px; font-weight: 300; line-height: 24px; color: #4384de; margin-top: 18px; letter-spacing: .09px; }
  .cookie p.second { margin-top: 0; }
  .cookie a { font-size: 16px; margin-left: 5px; letter-spacing: .2px; }
  .accept { width: 235px; height: 35px; border: 0; border-radius: 7px; background: #1b498f; color: #fff; font: 20px/35px 'Open Sans', sans-serif; padding: 0; }
  header { height: 85px; background: #3a84c9; display: flex; padding: 8px 0 0 325px; }
  .gov { font: 700 8px 'Lato', sans-serif; fill: #67500f; }
  .met { font: italic 400 36px 'Open Sans', sans-serif; fill: #4674b4; }
  .agency { font: 600 9px 'Open Sans', sans-serif; fill: #38639b; }
  .agenda { font: 700 9px 'Open Sans', sans-serif; fill: #555; }
  .y2030 { font: 800 15px 'Open Sans', sans-serif; fill: #c7202f; }
  .welcome { margin-left: 542px; width: 160px; display: flex; color: #fff; font-weight: 600; font-size: 20px; line-height: 28px; padding-top: 16px; }
  .welcome svg { margin: 10px 0 0 22px; }
  .search { width: 265px; height: 39px; margin-top: 15px; border: 1px solid #ccc; border-radius: 6px; background: #fff; color: #1b498f; display: flex; justify-content: space-between; padding: 7px 7px 0 6px; font-weight: 300; font-size: 18px; line-height: 23px; }
  .lens { fill: none; stroke: #8f8f8f; stroke-width: 2.8; }
  nav { height: 49px; background: #0054a6; display: flex; padding-left: 349px; color: #fff; font-weight: 300; font-size: 18px; line-height: 51px; white-space: nowrap; letter-spacing: -.3px; }
  nav a { flex: none; }
  .main { display: flex; height: 649px; }
  .contours { fill: none; background: #fefefe; }
  .contours path { vector-effect: non-scaling-stroke; }
  .soft { stroke: #f8f8f8; stroke-width: 2; }
  .soft .faint { stroke: #fbfbfb; }
  .soft text { font: italic 700 62px 'Open Sans', sans-serif; fill: #fafafa; stroke: none; }
  .lav { stroke: #f3f5fc; stroke-width: 2.5; }
  .sky { stroke: #eaf6fc; stroke-width: 2.5; }
  .soft2 { stroke: #f8f8f8; stroke-width: 2.5; }
  .soft2 .front { stroke-width: 5; }
  .soft2 .blob { fill: #f7f7f7; }
  .bigb { font: 800 215px 'Liberation Sans', sans-serif; fill: #f9f9f9; stroke: none; }
  .n9 { font: italic 700 86px 'Liberation Sans', sans-serif; fill: #f7f7f7; stroke: none; }
  .center { width: 1250px; flex: none; }
  .topstrip { height: 57px; display: flex; justify-content: space-between; }
  .alerts { width: 232px; height: 39px; background: #c1c1c1; display: flex; padding: 4px 0 0 5px; }
  .day { width: 32px; text-align: center; color: #fff; font-weight: 700; font-size: 11px; line-height: 12px; padding-top: 4px; }
  .dot { width: 31px; height: 31px; border-radius: 50%; background: #ff3; }
  .social { display: flex; gap: 5.3px; padding-top: 13px; }
  .blog { font: 700 13px 'Open Sans', sans-serif; fill: #fff; stroke: none; text-anchor: middle; }
  .cards { display: flex; gap: 12px; padding-left: 9px; }
  .card { width: 143px; height: 138px; border-radius: 8px; box-shadow: 0 0 5px #0003; background: #fff; padding-top: 10px; text-align: center; color: #1b498f; font-size: 18px; line-height: 22px; }
  .card span { display: block; padding: 11px 4px 0; }
  .ci { fill: none; stroke: #1558a0; stroke-width: 1.9; }
  .ci * { vector-effect: non-scaling-stroke; }
  .ci .solid { fill: #0c509b; }
  .ci .mid { stroke-width: 2.1; }
  .ci .thick { stroke-width: 2.6; }
  .pager { display: flex; gap: 13px; padding: 25px 0 0 601px; height: 61px; }
  .pager i { width: 17px; height: 17px; border-radius: 50%; border: 1px solid #999; }
  .pager .on { background: #4874b9; border: 0; }
  .rule { width: 1243px; height: 1px; background: #c4c4c4; margin-left: 3px; }
  .panels { display: flex; padding-left: 10px; }
  h2 { font-size: 28px; line-height: 38px; color: #1b498f; padding-top: 22px; height: 74px; white-space: nowrap; }
  .p1 { width: 312px; }
  .p2 { width: 320px; margin-left: 26px; }
  .p3 { width: 546px; margin-left: 25px; }
  .ptabs { height: 47px; background: #f4f4f4; display: flex; font-size: 16px; line-height: 46px; color: #777; white-space: nowrap; }
  .ptabs b { width: 185px; background: #1b498f; color: #fff; font-weight: 400; text-align: center; letter-spacing: .12px; }
  .ptabs span { padding-left: 15px; letter-spacing: .05px; }
  .coast { fill: none; stroke: #aaa; vector-effect: non-scaling-stroke; }
  .land { fill: #bbb; stroke: #858585; vector-effect: non-scaling-stroke; stroke-width: 1.3; filter: url(#relief); }
  .prov { fill: none; stroke: #8a8a8a; vector-effect: non-scaling-stroke; }
  .alert { fill: #e8dc50; stroke: #a98f12; vector-effect: non-scaling-stroke; }
  .apr { fill: none; stroke: #ae9621; vector-effect: non-scaling-stroke; }
  .level { height: 41px; background: #4874b9; color: #fff; font-weight: 300; font-size: 18px; line-height: 39px; padding-left: 13px; }
  .muni { height: 319px; background: #1b498f; padding: 6px 13px 0 12px; display: flex; flex-direction: column; align-items: center; }
  .msearch { width: 295px; height: 35px; border: 1px solid #fff; border-radius: 7px; display: flex; justify-content: space-between; padding: 5px 8px 0 4px; color: #fff; font-weight: 300; font-size: 18px; line-height: 23px; }
  .up { margin-top: 57px; }
  .muni p { color: #2684ff; font-weight: 300; font-size: 20px; line-height: 25px; text-align: center; margin-top: 49px; white-space: nowrap; }
  .prev-title { height: 39px; background: #1b498f; color: #fff; font-weight: 300; font-size: 18px; line-height: 39px; text-align: center; }
  .coast2 { fill: none; stroke: #9caaa4; vector-effect: non-scaling-stroke; }
  .green { fill: url(#gr); stroke: #869684; vector-effect: non-scaling-stroke; filter: url(#relief); }
  .lime { fill: #7db532; opacity: .5; filter: url(#haze); }
  .grey { fill: #b2b6a6; opacity: .6; filter: url(#haze); }
  .prov2 { fill: none; stroke: #7f947f; vector-effect: non-scaling-stroke; }
  .scroll { width: 20px; background: #f0f0f0; display: flex; flex-direction: column; }
  .thumb { width: 19px; height: 302px; margin-left: 1px; background: #cdcdcd; }
  .down { margin-top: auto; }
  .status { position: absolute; left: 0; bottom: 0; width: 333px; height: 26px; border: 1px solid #d8d8d8; border-left: 0; border-bottom: 0; background: #f8f8f8; color: #4a4a4f; font-size: 14.5px; line-height: 27px; padding-left: 5px; white-space: nowrap; letter-spacing: -.2px; }
  footer { height: 50px; flex: none; display: flex; background: linear-gradient(90deg, #25353d 0, #25353c 450px, #2b2d31 760px, #292b2f 1150px, #282c30 1500px, #1d2b33 1600px, #1d2b33); }
  .app { width: 51px; height: 50px; margin-right: 11px; border-bottom: 3px solid #b8b7b5; display: flex; align-items: center; justify-content: center; padding-right: 2px; }
  .app.one { margin-left: 5px; padding-right: 0; }
  .app.sel { width: 61px; background: #4c5b62; margin: 0 6px 0 -5px; }
  .tray { margin-left: auto; }
  .tt text { font: 15px 'Open Sans', sans-serif; fill: #fff; stroke: none; }
</style>
